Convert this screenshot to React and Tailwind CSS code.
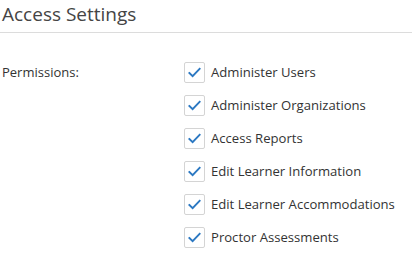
import React from 'react';

const permissions = [
  'Administer Users',
  'Administer Organizations',
  'Access Reports',
  'Edit Learner Information',
  'Edit Learner Accommodations',
  'Proctor Assessments'
];

const CheckItem = ({ label }) => (
  <label className="flex items-center h-[33px]">
    <span className="flex items-center justify-center w-[21px] h-[21px] border border-[#d4d4d4] rounded-[2px] bg-white">
      <svg width="15" height="15" viewBox="0 0 16 16" fill="none">
        <path d="M2.5 8.5 L6 12 L13.5 4" stroke="#2b78c2" strokeWidth="2" strokeLinecap="square" />
      </svg>
    </span>
    <span className="ml-[6px] text-[13.1px] text-[#333]">{label}</span>
  </label>
);

const App = () => {
  return (
    <div className="w-[412px] h-[271px] bg-white font-['Open_Sans',sans-serif] text-[#333]">
      <div className="h-[33px] border-b border-[#dcdcdc] pl-[2px]">
        <h2 className="text-[19px] leading-[28px] text-[#444]">Access Settings</h2>
      </div>
      <div className="flex pt-[23px]">
        <div className="w-[184px] pl-[2px] text-[13px] leading-[33px]">Permissions:</div>
        <div className="flex flex-col">
          {permissions.map((p) => (
            <CheckItem key={p} label={p} />
          ))}
        </div>
      </div>
    </div>
  );
};

export default App;
